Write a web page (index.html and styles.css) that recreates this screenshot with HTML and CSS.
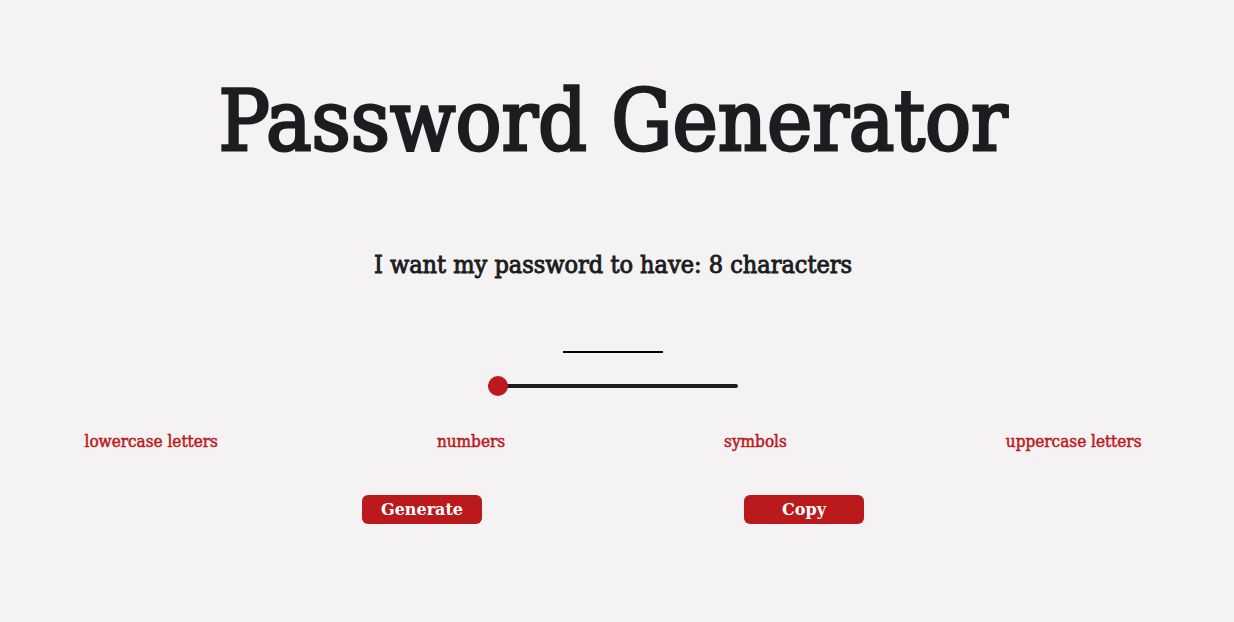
FILE: index.html
```html
<!DOCTYPE html>
<html lang="en">
<head>
<meta charset="utf-8">
<title>Password Generator</title>
<link rel="stylesheet" href="styles.css">
</head>
<body>
<main class="app">
  <h1 class="title">Password Generator</h1>
  <h2 class="length-label">I want my password to have: <span class="length-value">8</span> characters</h2>
  <div class="password-display"></div>
  <input class="length-slider" type="range" min="8" max="32" value="8" aria-label="Password length">
  <div class="options">
    <label class="option"><input type="checkbox" class="option-box">lowercase letters</label>
    <label class="option"><input type="checkbox" class="option-box">numbers</label>
    <label class="option"><input type="checkbox" class="option-box">symbols</label>
    <label class="option"><input type="checkbox" class="option-box">uppercase letters</label>
  </div>
  <div class="actions">
    <button class="btn" type="button">Generate</button>
    <button class="btn" type="button">Copy</button>
  </div>
</main>
</body>
</html>
```
FILE: styles.css
```css
html, body {
  margin: 0;
  padding: 0;
  background: #f4f2f3;
}
body {
  padding: 0 16px 0 8px;
  font-family: "DejaVu Serif Condensed", "DejaVu Serif", "Liberation Serif", serif;
  color: #1b1d20;
}
.app {
  display: flex;
  flex-direction: column;
  align-items: center;
}
.title {
  margin: 0;
  padding-top: 78px;
  font-size: 85px;
  line-height: 85px;
  font-weight: normal;
  -webkit-text-stroke: 2.8px #1b1d20;
  text-align: center;
}
.length-label {
  margin: 87px 0 0;
  font-size: 25px;
  line-height: 29px;
  font-weight: normal;
  -webkit-text-stroke: 0.9px #1b1d20;
  text-align: center;
}
.password-display {
  margin-top: 72px;
  width: 100px;
  height: 0;
  border-bottom: 2px solid #000;
}
.length-slider {
  -webkit-appearance: none;
  appearance: none;
  margin: 23px 0 0;
  width: 250px;
  height: 20px;
  background: transparent;
}
.length-slider::-webkit-slider-runnable-track {
  height: 4px;
  background: #1b1d20;
  border-radius: 2px;
}
.length-slider::-webkit-slider-thumb {
  -webkit-appearance: none;
  appearance: none;
  width: 20px;
  height: 20px;
  border-radius: 50%;
  background: #bb1a1c;
  margin-top: -8px;
}
.options {
  margin-top: 35px;
  display: flex;
  justify-content: center;
  gap: 219px;
}
.option {
  font-size: 17px;
  line-height: 20px;
  color: #bb1a1c;
  -webkit-text-stroke: 0.5px #bb1a1c;
  white-space: nowrap;
}
.option-box {
  display: none;
}
.actions {
  margin-top: 44px;
  display: flex;
  justify-content: center;
  gap: 262px;
}
.btn {
  width: 120px;
  height: 29px;
  border: none;
  border-radius: 6px;
  background: #bb1a1c;
  color: #fff;
  font-family: "DejaVu Serif", "Liberation Serif", serif;
  font-size: 16px;
  font-weight: bold;
  line-height: 30px;
  padding: 0;
}
```
